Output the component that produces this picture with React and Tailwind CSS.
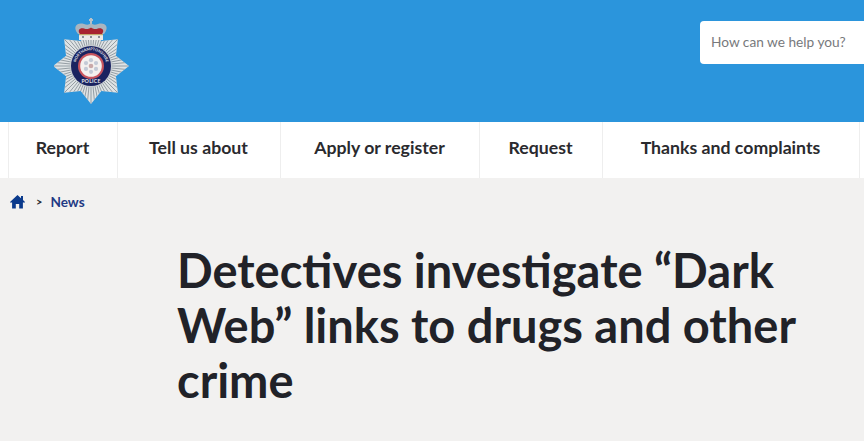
const navItems = [
  { label: 'Report', width: 'w-[109px]' },
  { label: 'Tell us about', width: 'w-[163px]' },
  { label: 'Apply or register', width: 'w-[199px]' },
  { label: 'Request', width: 'w-[123px]' },
  { label: 'Thanks and complaints', width: 'w-[257px]' },
]

const CX = 37
const CY = 49

function polar(angle, r) {
  return [CX + Math.sin(angle) * r, CY - Math.cos(angle) * r]
}

function Crest() {
  // 8 point star, notched between the points
  const starPoints = []
  for (let i = 0; i < 16; i++) {
    const [x, y] = polar((i / 16) * Math.PI * 2, i % 2 === 0 ? 38 : 27)
    starPoints.push(`${x},${y}`)
  }
  // fine radial grooves
  const grooves = []
  for (let i = 0; i < 64; i++) {
    const [x, y] = polar((i / 64) * Math.PI * 2, 40)
    grooves.push(<line key={i} x1={CX} y1={CY} x2={x} y2={y} stroke="#8b959c" strokeWidth="0.9" />)
  }
  return (
    <svg width="76" height="90" viewBox="0 0 76 90" aria-label="Northamptonshire Police crest">
      <defs>
        <clipPath id="star">
          <polygon points={starPoints.join(' ')} />
        </clipPath>
        <path id="ringTop" d="M 23.1 56 A 15.6 15.6 0 1 1 50.9 56" />
      </defs>
      <polygon points={starPoints.join(' ')} fill="#dfe3e5" />
      <g clipPath="url(#star)">{grooves}</g>

      {/* crown */}
      <path d="M37 1 V7 M35 3 H39" stroke="#b9c2c9" strokeWidth="2" fill="none" />
      <path d="M24 17 C18 10 23 5 30 7 C33 8 35 8 37 6 C39 8 41 8 44 7 C51 5 56 10 50 17 Z" fill="#aab5bf" />
      <path d="M26 17 C23 13 26 10.5 30 11.5 C33 12.5 35 12 37 10.5 C39 12 41 12.5 44 11.5 C48 10.5 51 13 48 17 Z" fill="#a8232f" />
      <rect x="25" y="17" width="24" height="6" fill="#eceae8" />
      <rect x="25" y="17" width="24" height="1.2" fill="#c4a96c" />
      <rect x="28" y="19" width="2" height="2" fill="#8a8f96" />
      <rect x="36" y="19" width="2" height="2" fill="#8a8f96" />
      <rect x="44" y="19" width="2" height="2" fill="#8a8f96" />

      {/* badge */}
      <circle cx={CX} cy={CY} r="21" fill="#c6ccd1" />
      <circle cx={CX} cy={CY} r="20" fill="#1a2360" />
      <circle cx={CX} cy={CY} r="13" fill="#c8555e" />
      <circle cx={CX} cy={CY} r="10.8" fill="#f4f1ef" />
      {[0, 1, 2, 3, 4, 5].map((i) => {
        const [x, y] = polar((i * Math.PI) / 3, 5.8)
        return <circle key={i} cx={x} cy={y} r="2.1" fill="#c3cad6" />
      })}
      <circle cx={CX} cy={CY} r="2.3" fill="#c9a9a9" />
      <text fontSize="3.8" fontWeight="700" fill="#e6e8ee">
        <textPath href="#ringTop" startOffset="50%" textAnchor="middle">NORTHAMPTONSHIRE</textPath>
      </text>
      <text x={CX} y="66" fontSize="5" fontWeight="700" fill="#e6e8ee" textAnchor="middle" letterSpacing="0.3">POLICE</text>
    </svg>
  )
}

export default function App() {
  return (
    <div className="h-[441px] w-[864px] overflow-hidden bg-[#f2f1f0] font-['Lato','Open_Sans',sans-serif]">
      <header className="flex h-[122px] items-start justify-between bg-[#2b95dc]">
        <div className="ml-[54px] mt-[17px]">
          <Crest />
        </div>
        <div className="mt-[21px] flex h-[43px] w-[164px] items-center rounded-l-[4px] bg-white pl-[11px] text-[13.7px] text-[#77797c]">
          How can we help you?
        </div>
      </header>

      <nav className="h-[56px] bg-white pl-[8px]">
        <ul className="flex h-full border-l border-[#eeeeee]">
          {navItems.map((item) => (
            <li
              key={item.label}
              className={`flex items-center justify-center border-r border-[#eeeeee] pb-[3px] pr-[1px] text-[17.7px] font-bold text-[#2a2a2e] ${item.width}`}
            >
              {item.label}
            </li>
          ))}
        </ul>
      </nav>

      <div className="flex items-center pl-[10px] pt-[14px] text-[13.6px]">
        <svg width="15" height="14" viewBox="0 0 15 14" aria-label="Home">
          <path d="M7.5 0 L11 3.2 V1 H13 V5 L15 7 V7.6 H12.9 V13.5 H9.2 V9 H5.8 V13.5 H2.1 V7.6 H0 V7 Z" fill="#0b3a8c" />
        </svg>
        <span className="ml-[11px] text-[11px] font-bold text-[#2a2a2e]">&gt;</span>
        <a className="ml-[8px] font-bold text-[#1f3a84]">News</a>
      </div>

      <h1 className="mt-[31px] pl-[177px] pr-[40px] text-[47px] font-bold leading-[55px] text-[#212228]">
        Detectives investigate “Dark Web” links to drugs and other crime
      </h1>
    </div>
  )
}
